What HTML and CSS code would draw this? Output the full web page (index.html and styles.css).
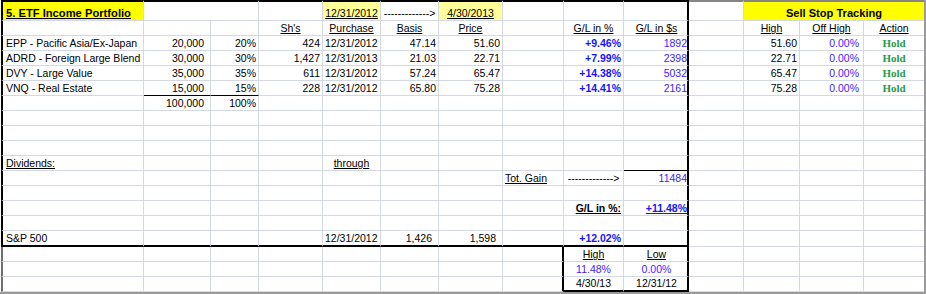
FILE: index.html
```html
<!DOCTYPE html>
<html>
<head>
<meta charset="utf-8">
<link rel="stylesheet" href="styles.css">
</head>
<body>
<div class="sheet">
  <div class="row r0">
    <div class="c ca title">5. ETF Income Portfolio</div>
    <div class="c nr"></div>
    <div class="c"></div>
    <div class="c"></div>
    <div class="c cen pale u">12/31/2012</div>
    <div class="c cen">-------------&gt;</div>
    <div class="c cen pale u">4/30/2013</div>
    <div class="c"></div>
    <div class="c"></div>
    <div class="c cj"></div>
    <div class="c tg"></div>
    <div class="c span3 yellow b cen tg">Sell Stop Tracking</div>
  </div>
  <div class="row">
    <div class="c ca"></div><div class="c"></div><div class="c"></div>
    <div class="c cen u">Sh's</div>
    <div class="c cen u">Purchase</div>
    <div class="c cen u">Basis</div>
    <div class="c cen u">Price</div>
    <div class="c"></div>
    <div class="c cen u">G/L in %</div>
    <div class="c cen u cj">G/L in $s</div>
    <div class="c"></div>
    <div class="c cen u">High</div>
    <div class="c cen u">Off High</div>
    <div class="c cen u nr">Action</div>
  </div>
  <div class="row">
    <div class="c ca">EPP - Pacific Asia/Ex-Japan</div>
    <div class="c rt acc">20,000</div><div class="c rt">20%</div><div class="c rt">424</div>
    <div class="c">12/31/2012</div><div class="c rt">47.14</div><div class="c rt">51.60</div>
    <div class="c"></div>
    <div class="c rt b blue">+9.46%</div>
    <div class="c rt purple cj">1892</div>
    <div class="c"></div>
    <div class="c rt">51.60</div><div class="c rt purple pm">0.00%</div>
    <div class="c cen hold nr">Hold</div>
  </div>
  <div class="row">
    <div class="c ca">ADRD - Foreign Large Blend</div>
    <div class="c rt acc">30,000</div><div class="c rt">30%</div><div class="c rt">1,427</div>
    <div class="c">12/31/2013</div><div class="c rt">21.03</div><div class="c rt">22.71</div>
    <div class="c"></div>
    <div class="c rt b blue">+7.99%</div>
    <div class="c rt purple cj">2398</div>
    <div class="c"></div>
    <div class="c rt">22.71</div><div class="c rt purple pm">0.00%</div>
    <div class="c cen hold nr">Hold</div>
  </div>
  <div class="row">
    <div class="c ca">DVY - Large Value</div>
    <div class="c rt acc">35,000</div><div class="c rt">35%</div><div class="c rt">611</div>
    <div class="c">12/31/2012</div><div class="c rt">57.24</div><div class="c rt">65.47</div>
    <div class="c"></div>
    <div class="c rt b blue">+14.38%</div>
    <div class="c rt purple cj">5032</div>
    <div class="c"></div>
    <div class="c rt">65.47</div><div class="c rt purple pm">0.00%</div>
    <div class="c cen hold nr">Hold</div>
  </div>
  <div class="row">
    <div class="c ca">VNQ - Real Estate</div>
    <div class="c rt acc bk">15,000</div><div class="c rt bk">15%</div><div class="c rt">228</div>
    <div class="c">12/31/2012</div><div class="c rt">65.80</div><div class="c rt">75.28</div>
    <div class="c"></div>
    <div class="c rt b blue">+14.41%</div>
    <div class="c rt purple cj">2161</div>
    <div class="c"></div>
    <div class="c rt">75.28</div><div class="c rt purple pm">0.00%</div>
    <div class="c cen hold nr">Hold</div>
  </div>
  <div class="row">
    <div class="c ca"></div>
    <div class="c rt acc">100,000</div><div class="c rt">100%</div>
    <div class="c"></div><div class="c"></div><div class="c"></div><div class="c"></div><div class="c"></div><div class="c"></div>
    <div class="c cj"></div><div class="c"></div><div class="c"></div><div class="c"></div><div class="c nr"></div>
  </div>
  <div class="row">
    <div class="c ca"></div><div class="c"></div><div class="c"></div><div class="c"></div><div class="c"></div><div class="c"></div><div class="c"></div><div class="c"></div><div class="c"></div>
    <div class="c cj"></div><div class="c"></div><div class="c"></div><div class="c"></div><div class="c nr"></div>
  </div>
  <div class="row">
    <div class="c ca"></div><div class="c"></div><div class="c"></div><div class="c"></div><div class="c"></div><div class="c"></div><div class="c"></div><div class="c"></div><div class="c"></div>
    <div class="c cj"></div><div class="c"></div><div class="c"></div><div class="c"></div><div class="c nr"></div>
  </div>
  <div class="row">
    <div class="c ca"></div><div class="c"></div><div class="c"></div><div class="c"></div><div class="c"></div><div class="c"></div><div class="c"></div><div class="c"></div><div class="c"></div>
    <div class="c cj"></div><div class="c"></div><div class="c"></div><div class="c"></div><div class="c nr"></div>
  </div>
  <div class="row">
    <div class="c ca u">Dividends:</div><div class="c"></div><div class="c"></div><div class="c"></div>
    <div class="c cen u">through</div>
    <div class="c"></div><div class="c"></div><div class="c"></div><div class="c"></div>
    <div class="c cj bk"></div><div class="c"></div><div class="c"></div><div class="c"></div><div class="c nr"></div>
  </div>
  <div class="row">
    <div class="c ca"></div><div class="c"></div><div class="c"></div><div class="c"></div><div class="c"></div><div class="c"></div><div class="c"></div>
    <div class="c u">Tot. Gain</div>
    <div class="c cen">-------------&gt;</div>
    <div class="c rt purple cj">11484</div>
    <div class="c"></div><div class="c"></div><div class="c"></div><div class="c nr"></div>
  </div>
  <div class="row">
    <div class="c ca"></div><div class="c"></div><div class="c"></div><div class="c"></div><div class="c"></div><div class="c"></div><div class="c"></div><div class="c"></div><div class="c"></div>
    <div class="c cj"></div><div class="c"></div><div class="c"></div><div class="c"></div><div class="c nr"></div>
  </div>
  <div class="row">
    <div class="c ca"></div><div class="c"></div><div class="c"></div><div class="c"></div><div class="c"></div><div class="c"></div><div class="c"></div><div class="c"></div>
    <div class="c rt b u">G/L in %:</div>
    <div class="c rt b u blue cj">+11.48%</div>
    <div class="c"></div><div class="c"></div><div class="c"></div><div class="c nr"></div>
  </div>
  <div class="row">
    <div class="c ca"></div><div class="c"></div><div class="c"></div><div class="c"></div><div class="c"></div><div class="c"></div><div class="c"></div><div class="c"></div><div class="c"></div>
    <div class="c cj"></div><div class="c"></div><div class="c"></div><div class="c"></div><div class="c nr"></div>
  </div>
  <div class="row r15">
    <div class="c ca tb">S&amp;P 500</div><div class="c tb"></div><div class="c tb"></div><div class="c tb"></div>
    <div class="c tb">12/31/2012</div>
    <div class="c rt acc tb">1,426</div>
    <div class="c rt acc tb">1,598</div>
    <div class="c tb"></div>
    <div class="c rt b blue tb">+12.02%</div>
    <div class="c cj tb"></div>
    <div class="c"></div><div class="c"></div><div class="c"></div><div class="c nr"></div>
  </div>
  <div class="row">
    <div class="c ca lo"></div><div class="c"></div><div class="c"></div><div class="c"></div><div class="c"></div><div class="c"></div><div class="c"></div>
    <div class="c hb"></div>
    <div class="c cen u">High</div>
    <div class="c cen u cj">Low</div>
    <div class="c"></div><div class="c"></div><div class="c"></div><div class="c nr"></div>
  </div>
  <div class="row">
    <div class="c ca lo"></div><div class="c"></div><div class="c"></div><div class="c"></div><div class="c"></div><div class="c"></div><div class="c"></div>
    <div class="c hb"></div>
    <div class="c cen purple">11.48%</div>
    <div class="c cen purple cj">0.00%</div>
    <div class="c"></div><div class="c"></div><div class="c"></div><div class="c nr"></div>
  </div>
  <div class="row last">
    <div class="c ca lo"></div><div class="c"></div><div class="c"></div><div class="c"></div><div class="c"></div><div class="c"></div><div class="c"></div>
    <div class="c hb"></div>
    <div class="c cen tb">4/30/13</div>
    <div class="c cen cj tb">12/31/12</div>
    <div class="c"></div><div class="c"></div><div class="c"></div><div class="c nr"></div>
  </div>
</div>
</body>
</html>
```
FILE: styles.css
```css
html, body {
  margin: 0;
  padding: 0;
  background: #ffffff;
}

body {
  width: 926px;
  height: 294px;
  overflow: hidden;
  font-family: "Liberation Sans", Arial, sans-serif;
  font-size: 10.5px;
  color: #000000;
}

.sheet {
  display: flex;
  flex-direction: column;
  width: 926px;
  padding-left: 1px;
  border-right: 2px solid #9a9a9a;
  border-bottom: 2px solid #9a9a9a;
  box-sizing: border-box;
  height: 294px;
}

.row {
  display: grid;
  grid-template-columns: 143px 67px 48px 64px 58px 58px 64px 61px 60px 65px 55px 56px 64px 60px;
  height: 15px;
}

.r0 {
  height: 21px;
}

.r0 > .c {
  border-top: 2px solid #000000;
}

.r0 > .c.tg {
  border-top: 2px solid #858585;
}

.r15 {
  height: 16px;
}

.c {
  box-sizing: border-box;
  border-right: 1px solid #d3d8e3;
  border-bottom: 1px solid #d3d8e3;
  display: flex;
  align-items: flex-end;
  padding: 0 2px 1px 2px;
  line-height: 12px;
  white-space: nowrap;
  overflow: visible;
  min-width: 0;
}

.ca {
  border-left: 2px solid #000000;
  padding-left: 3px;
}

.ca.lo {
  border-left-color: #6e6e6e;
}

.nr {
  border-right: none;
}

.cj {
  border-right: 2px solid #000000;
  padding-right: 0;
}

.hb {
  border-right: 2px solid #000000;
}

.tb {
  border-bottom: 2px solid #000000;
}

.bk {
  border-bottom-color: #000000;
}

.rt {
  justify-content: flex-end;
}

.cen {
  justify-content: center;
}

.acc {
  padding-right: 6px;
}

.pm {
  padding-right: 4px;
}

.u {
  text-decoration: underline;
}

.b {
  font-weight: bold;
}

.blue {
  color: #1414ff;
}

.purple {
  color: #3d1eff;
}

.hold {
  font-family: "Liberation Serif", "Times New Roman", serif;
  font-weight: bold;
  font-size: 11px;
  color: #1f9b4d;
}

.title {
  background: #ffff00;
  font-weight: bold;
  font-size: 11.2px;
  text-decoration: underline;
  padding-bottom: 1px;
}

.pale {
  background: #ffff99;
}

.yellow {
  background: #ffff00;
  font-size: 11.1px;
}

.span3 {
  grid-column: span 3;
  border-right: none;
}
```
